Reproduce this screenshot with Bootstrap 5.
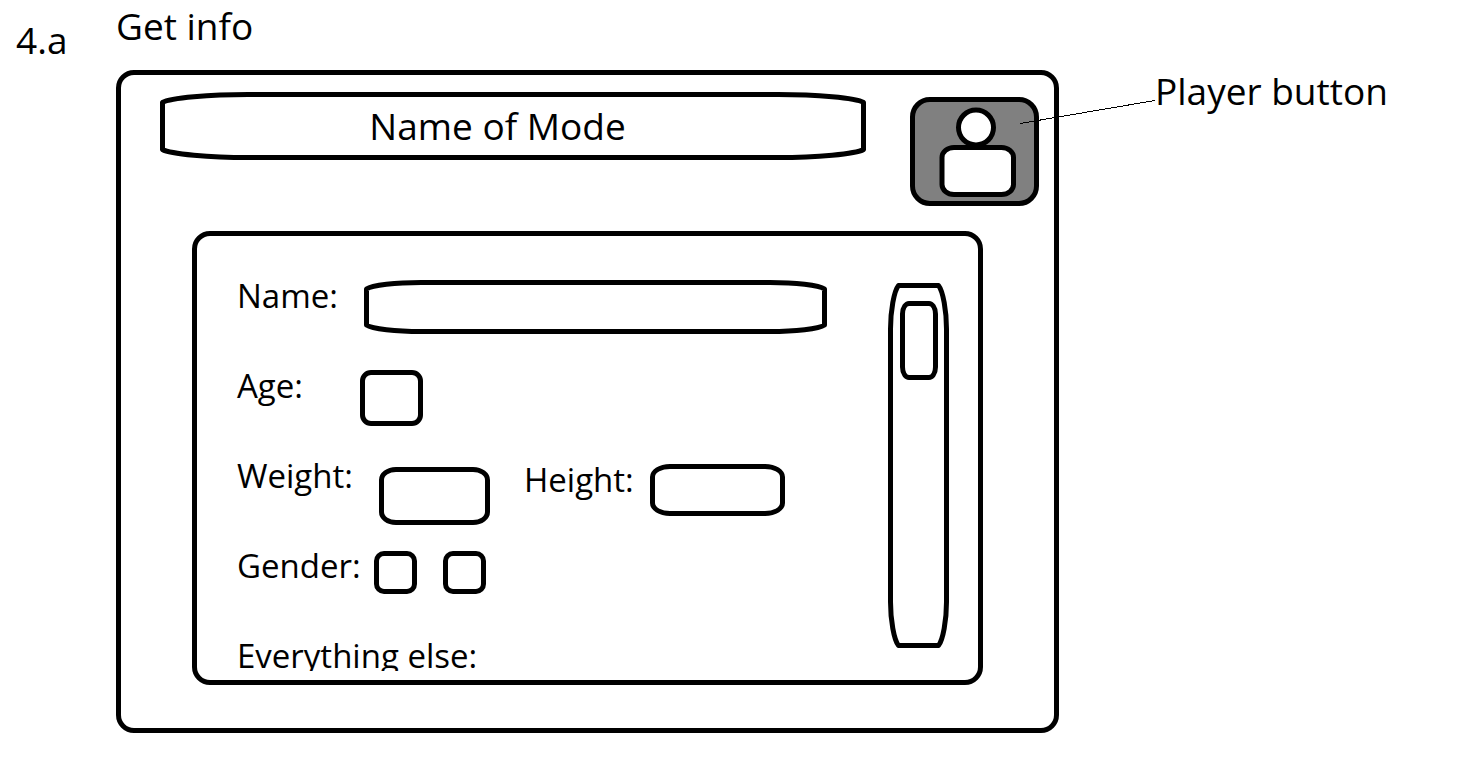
<!DOCTYPE html>
<html lang="en">
<head>
<meta charset="utf-8">
<meta name="viewport" content="width=device-width, initial-scale=1">
<title>4.a Get info</title>
<link rel="stylesheet" href="https://cdn.jsdelivr.net/npm/bootstrap@5.3.0/dist/css/bootstrap.min.css">
<style>
  body { font-family: "Open Sans", "Noto Sans", sans-serif; color: #000; background: #fff; }
  .sheet { display: grid; grid-template-columns: 116px minmax(0, 943fr) minmax(0, 412fr); align-items: start; }
  .big-text { font-size: 37px; line-height: 50px; font-weight: 400; margin: 0; white-space: nowrap; }
  .step { padding: 15px 0 0 16px; }
  .note-col { padding: 66px 0 0 96px; }
  .stage-title { height: 70px; padding-top: 1px; }

  .ink { border: 5px solid #000; background: #fff; }
  .frame { border-radius: 18px; padding-bottom: 43px; }
  .top-bar { height: 156px; padding: 17px 15px 0 39px; gap: 44px; }
  .mode-name { height: 68px; padding: 0 31px 0 0; }
  .player { width: 129px; height: 109px; margin-top: 5px; padding: 0; border-radius: 20px; background: #808080; }
  .panel { margin: 0 71px; height: 454px; border-radius: 18px; padding: 40px 29px 9px 40px; gap: 61px; }

  /* Outlines whose corners bulge along one axis */
  .bulge-wide {
    border-image: url("data:image/svg+xml,%3Csvg xmlns='http://www.w3.org/2000/svg' width='240' height='60'%3E%3Cpath d='M2.5 30V10.500C10 6 50 2.500 88 2.500H152C190 2.500 230 6 237.500 10.500V49.500C230 54 190 57.500 152 57.500H88C50 57.500 10 54 2.500 49.500Z' fill='none' stroke='%23000' stroke-width='5' stroke-linejoin='round'/%3E%3C/svg%3E") 14 90 / 14px 90px stretch;
  }
  .bulge-field {
    border-image: url("data:image/svg+xml,%3Csvg xmlns='http://www.w3.org/2000/svg' width='160' height='54'%3E%3Cpath d='M2.5 27V9C8 5 32 2.500 57 2.500H103C128 2.500 152 5 157.500 9V45C152 49 128 51.500 103 51.500H57C32 51.500 8 49 2.500 45Z' fill='none' stroke='%23000' stroke-width='5' stroke-linejoin='round'/%3E%3C/svg%3E") 12 60 / 12px 60px stretch;
  }
  .bulge-tall {
    border-image: url("data:image/svg+xml,%3Csvg xmlns='http://www.w3.org/2000/svg' width='61' height='140'%3E%3Cpath d='M10.500 2.500H50.500C55 8 58.500 28 58.500 46V94C58.500 112 55 132 50.500 137.500H10.500C6 132 2.500 112 2.500 94V46C2.500 28 6 8 10.500 2.500Z' fill='none' stroke='%23000' stroke-width='5' stroke-linejoin='round'/%3E%3C/svg%3E") 50 14 / 50px 14px stretch;
  }

  .fields { min-width: 0; }
  .line { height: 90px; display: flex; align-items: flex-start; }
  .line label, .line-text { font-size: 33px; line-height: 40px; white-space: nowrap; flex-shrink: 0; margin: 0; }
  .field { padding: 0 10px; font-size: 28px; outline-offset: 2px; border-radius: 0; min-width: 0; appearance: none; }
  .lead-name { width: 127px; }
  .lead-age { width: 123px; }
  .lead-weight { width: 142px; }
  .lead-gender { width: 137px; }
  .lead-height { width: 126px; }
  .f-name { height: 54px; margin-top: 4px; }
  .f-age { width: 63px; height: 56px; margin-top: 4px; border-radius: 11px; }
  .f-weight { width: 111px; height: 58px; margin-top: 11px; border-radius: 17px / 13px; }
  .height-pair { margin: 4px 0 0 34px; }
  .f-height { width: 135px; height: 52px; margin-top: 4px; border-radius: 20px / 13px; }
  .tick { width: 43px; height: 43px; margin: 5px 0 0; border-radius: 10px; appearance: none; }
  .tick:checked { background: #808080; }
  .tick + .tick { margin-left: 26px; }
  .cut-off { height: 35px; overflow: hidden; }

  .track { flex: 0 0 61px; height: 365px; margin-top: 7px; padding: 13px 6px 0 7px; }
  .thumb { height: 79px; border-radius: 9px / 13px; }
  .pointer { left: -39px; top: 100px; }
</style>
</head>
<body>
<div class="sheet">
  <p class="big-text step">4.a</p>
  <main>
    <h1 class="big-text stage-title">Get info</h1>
    <section class="ink frame">
      <header class="top-bar d-flex align-items-start">
        <h2 class="big-text ink bulge-wide mode-name flex-grow-1 d-flex align-items-center justify-content-center">Name of Mode</h2>
        <button type="button" class="ink player flex-shrink-0" aria-label="Player">
          <svg class="d-block" width="119" height="99" viewBox="0 0 119 99" fill="#fff" stroke="#000" stroke-width="5" aria-hidden="true">
            <rect x="27" y="45.500" width="71.500" height="47" rx="12" ry="10"/>
            <circle cx="61" cy="25.500" r="17.500"/>
          </svg>
        </button>
      </header>
      <div class="ink panel d-flex align-items-start">
        <form class="fields flex-grow-1">
          <div class="line">
            <label class="lead-name" for="name">Name:</label>
            <input class="ink field bulge-field f-name flex-grow-1" id="name" type="text">
          </div>
          <div class="line">
            <label class="lead-age" for="age">Age:</label>
            <input class="ink field f-age" id="age" type="text" inputmode="numeric">
          </div>
          <div class="line">
            <label class="lead-weight" for="weight">Weight:</label>
            <input class="ink field f-weight" id="weight" type="text">
            <div class="height-pair d-flex align-items-start">
              <label class="lead-height" for="height">Height:</label>
              <input class="ink field f-height" id="height" type="text">
            </div>
          </div>
          <div class="line" role="group" aria-labelledby="gender">
            <label class="lead-gender" id="gender" for="gender-a">Gender:</label>
            <input class="ink tick" id="gender-a" type="checkbox">
            <input class="ink tick" id="gender-b" type="checkbox" aria-labelledby="gender">
          </div>
          <p class="line-text cut-off">Everything else:</p>
        </form>
        <div class="ink bulge-tall track" role="scrollbar" aria-orientation="vertical" aria-valuenow="0" aria-label="Scroll form">
          <div class="ink thumb"></div>
        </div>
      </div>
    </section>
  </main>
  <aside class="note-col position-relative">
    <svg class="pointer position-absolute" width="136" height="25" viewBox="0 0 136 25" aria-hidden="true">
      <path d="M0 23.500L135 .5" stroke="#000" fill="none" shape-rendering="crispEdges"/>
    </svg>
    <p class="big-text">Player button</p>
  </aside>
</div>
<script src="https://cdn.jsdelivr.net/npm/bootstrap@5.3.0/dist/js/bootstrap.bundle.min.js"></script>
</body>
</html>
